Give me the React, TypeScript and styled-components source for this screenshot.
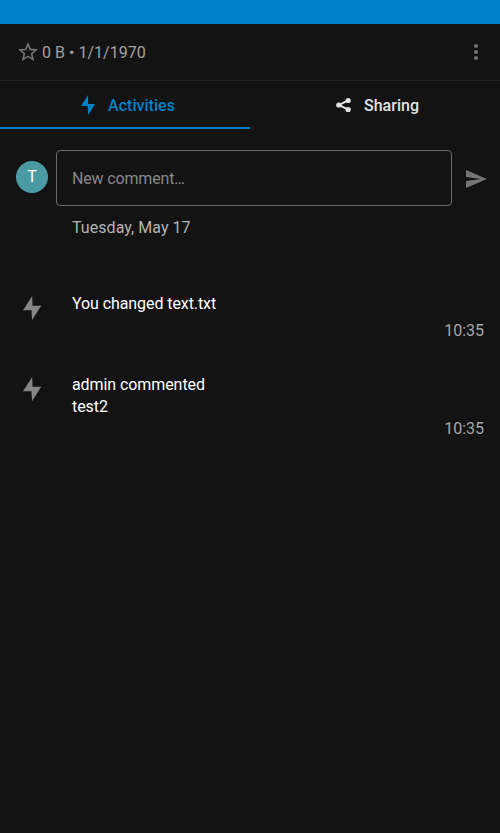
import React from "react";
import styled, { createGlobalStyle } from "styled-components";

const GlobalStyle = createGlobalStyle`
  * { box-sizing: border-box; }
  body {
    margin: 0;
    background: #131313;
    font-family: Roboto, sans-serif;
    font-size: 16px;
    line-height: 22px;
  }
`;

const Screen = styled.div`
  display: flex;
  flex-direction: column;
  width: 500px;
  height: 833px;
  background: #131313;
  overflow: hidden;
`;

const StatusBar = styled.div`
  height: 24px;
  background: #0082c9;
`;

const FileHeader = styled.header`
  display: flex;
  align-items: center;
  height: 57px;
  padding: 0 12px 0 16px;
  border-bottom: 1px solid #262626;
`;

const FileInfo = styled.span`
  flex: 1;
  margin-left: 2px;
  padding-top: 2px;
  letter-spacing: 0.02px;
  color: #a1a1a1;
`;

const Tabs = styled.nav`
  display: grid;
  grid-template-columns: 1fr 1fr;
  height: 48px;
`;

const Tab = styled.div<{ $active?: boolean }>`
  display: flex;
  align-items: center;
  justify-content: center;
  gap: 8px;
  padding-top: 2px;
  padding-left: 1px;
  font-weight: 500;
  color: ${(p) => (p.$active ? "#0082c9" : "#e2e2e2")};
  border-bottom: 2px solid ${(p) => (p.$active ? "#0082c9" : "transparent")};
`;

const TabLabel = styled.span`
  padding-top: 2px;
  letter-spacing: 0.02px;
`;

const CommentBar = styled.div`
  display: flex;
  align-items: center;
  height: 56px;
  margin-top: 21px;
  padding: 0 12px 0 16px;
`;

const Avatar = styled.div`
  width: 32px;
  height: 32px;
  margin: 0 8px 2px 0;
  border-radius: 50%;
  background: #499aa2;
  color: #fff;
  text-align: center;
  line-height: 32px;
`;

const CommentField = styled.div`
  width: 396px;
  height: 56px;
  margin-right: 12px;
  padding: 0 15px;
  border: 1px solid #6b6b6b;
  border-radius: 4px;
  color: #888;
  letter-spacing: -0.16px;
  line-height: 55px;
`;

const DateHeading = styled.h2`
  margin: 11px 0 0 72px;
  height: 76px;
  font-size: 16px;
  font-weight: 400;
  letter-spacing: 0.05px;
  line-height: 22px;
  color: #b4b4b4;
`;

const Activity = styled.article`
  display: grid;
  grid-template-columns: 32px 1fr;
  column-gap: 24px;
  padding: 0 16px;
  margin-bottom: 32px;
`;

const ActivityIcon = styled.div`
  height: 27px;
  margin-top: -1px;
  margin-bottom: 1px;
`;

const ActivityText = styled.div`
  color: #fff;
  letter-spacing: -0.08px;
`;

const ActivityTime = styled.time`
  grid-column: 2;
  justify-self: end;
  color: #a6a6a6;
`;

const Icon = styled.svg`
  display: block;
  flex: none;
  fill: currentColor;
`;

const MutedIcon = styled(Icon)`
  color: #757575;
`;

const BoltIcon = styled(Icon)<{ $muted?: boolean }>`
  color: ${(p) => (p.$muted ? "#868686" : "inherit")};
`;

const Bolt = ({ muted }: { muted?: boolean }) =>
  muted ? (
    <BoltIcon width="32" height="32" viewBox="0 0 32 32" $muted>
      <path d="M16.2 4 7 18.2h8.5L16 28.2 25.2 13.8h-8.7z" />
    </BoltIcon>
  ) : (
    <BoltIcon width="24" height="24" viewBox="0 0 24 24">
      <path d="M12 2 5 12.9h6.6L12.3 22 19 11h-6.8z" />
    </BoltIcon>
  );

const activities = [
  { lines: ["You changed text.txt"], time: "10:35" },
  { lines: ["admin commented", "test2"], time: "10:35" },
];

export default function App() {
  return (
    <Screen>
      <GlobalStyle />
      <StatusBar />
      <FileHeader>
        <MutedIcon width="24" height="24" viewBox="0 0 24 24">
          <path d="M22 9.24l-7.19-.62L12 2 9.19 8.63 2 9.24l5.46 4.73L5.82 21 12 17.27 18.18 21l-1.63-7.03L22 9.24zM12 15.4l-3.76 2.27 1-4.28-3.32-2.88 4.38-.38L12 6.1l1.71 4.04 4.38.38-3.32 2.88 1 4.28L12 15.4z" />
        </MutedIcon>
        <FileInfo>0 B • 1/1/1970</FileInfo>
        <MutedIcon width="24" height="24" viewBox="0 0 24 24">
          <path d="M12 8a2 2 0 1 0 0-4 2 2 0 0 0 0 4zm0 2a2 2 0 1 0 0 4 2 2 0 0 0 0-4zm0 6a2 2 0 1 0 0 4 2 2 0 0 0 0-4z" />
        </MutedIcon>
      </FileHeader>
      <Tabs>
        <Tab $active>
          <Bolt />
          <TabLabel>Activities</TabLabel>
        </Tab>
        <Tab>
          <Icon width="24" height="24" viewBox="0 0 24 24">
            <path
              d="M16.4 7.4 6.7 12 16.4 16.6"
              fill="none"
              stroke="currentColor"
              strokeWidth="2"
            />
            <circle cx="16.2" cy="7.5" r="2.6" />
            <circle cx="6.8" cy="12" r="2.6" />
            <circle cx="16.2" cy="16.5" r="2.6" />
          </Icon>
          <TabLabel>Sharing</TabLabel>
        </Tab>
      </Tabs>
      <CommentBar>
        <Avatar>T</Avatar>
        <CommentField>New comment…</CommentField>
        <MutedIcon width="24" height="26" viewBox="0 -1 24 24">
          <path d="M2.01 21 23 12 2.01 3 2 10l15 2-15 2z" />
        </MutedIcon>
      </CommentBar>
      <DateHeading>Tuesday, May 17</DateHeading>
      {activities.map((activity, i) => (
        <Activity key={i}>
          <ActivityIcon>
            <Bolt muted />
          </ActivityIcon>
          <ActivityText>
            {activity.lines.map((line) => (
              <div key={line}>{line}</div>
            ))}
          </ActivityText>
          <ActivityTime>{activity.time}</ActivityTime>
        </Activity>
      ))}
    </Screen>
  );
}
